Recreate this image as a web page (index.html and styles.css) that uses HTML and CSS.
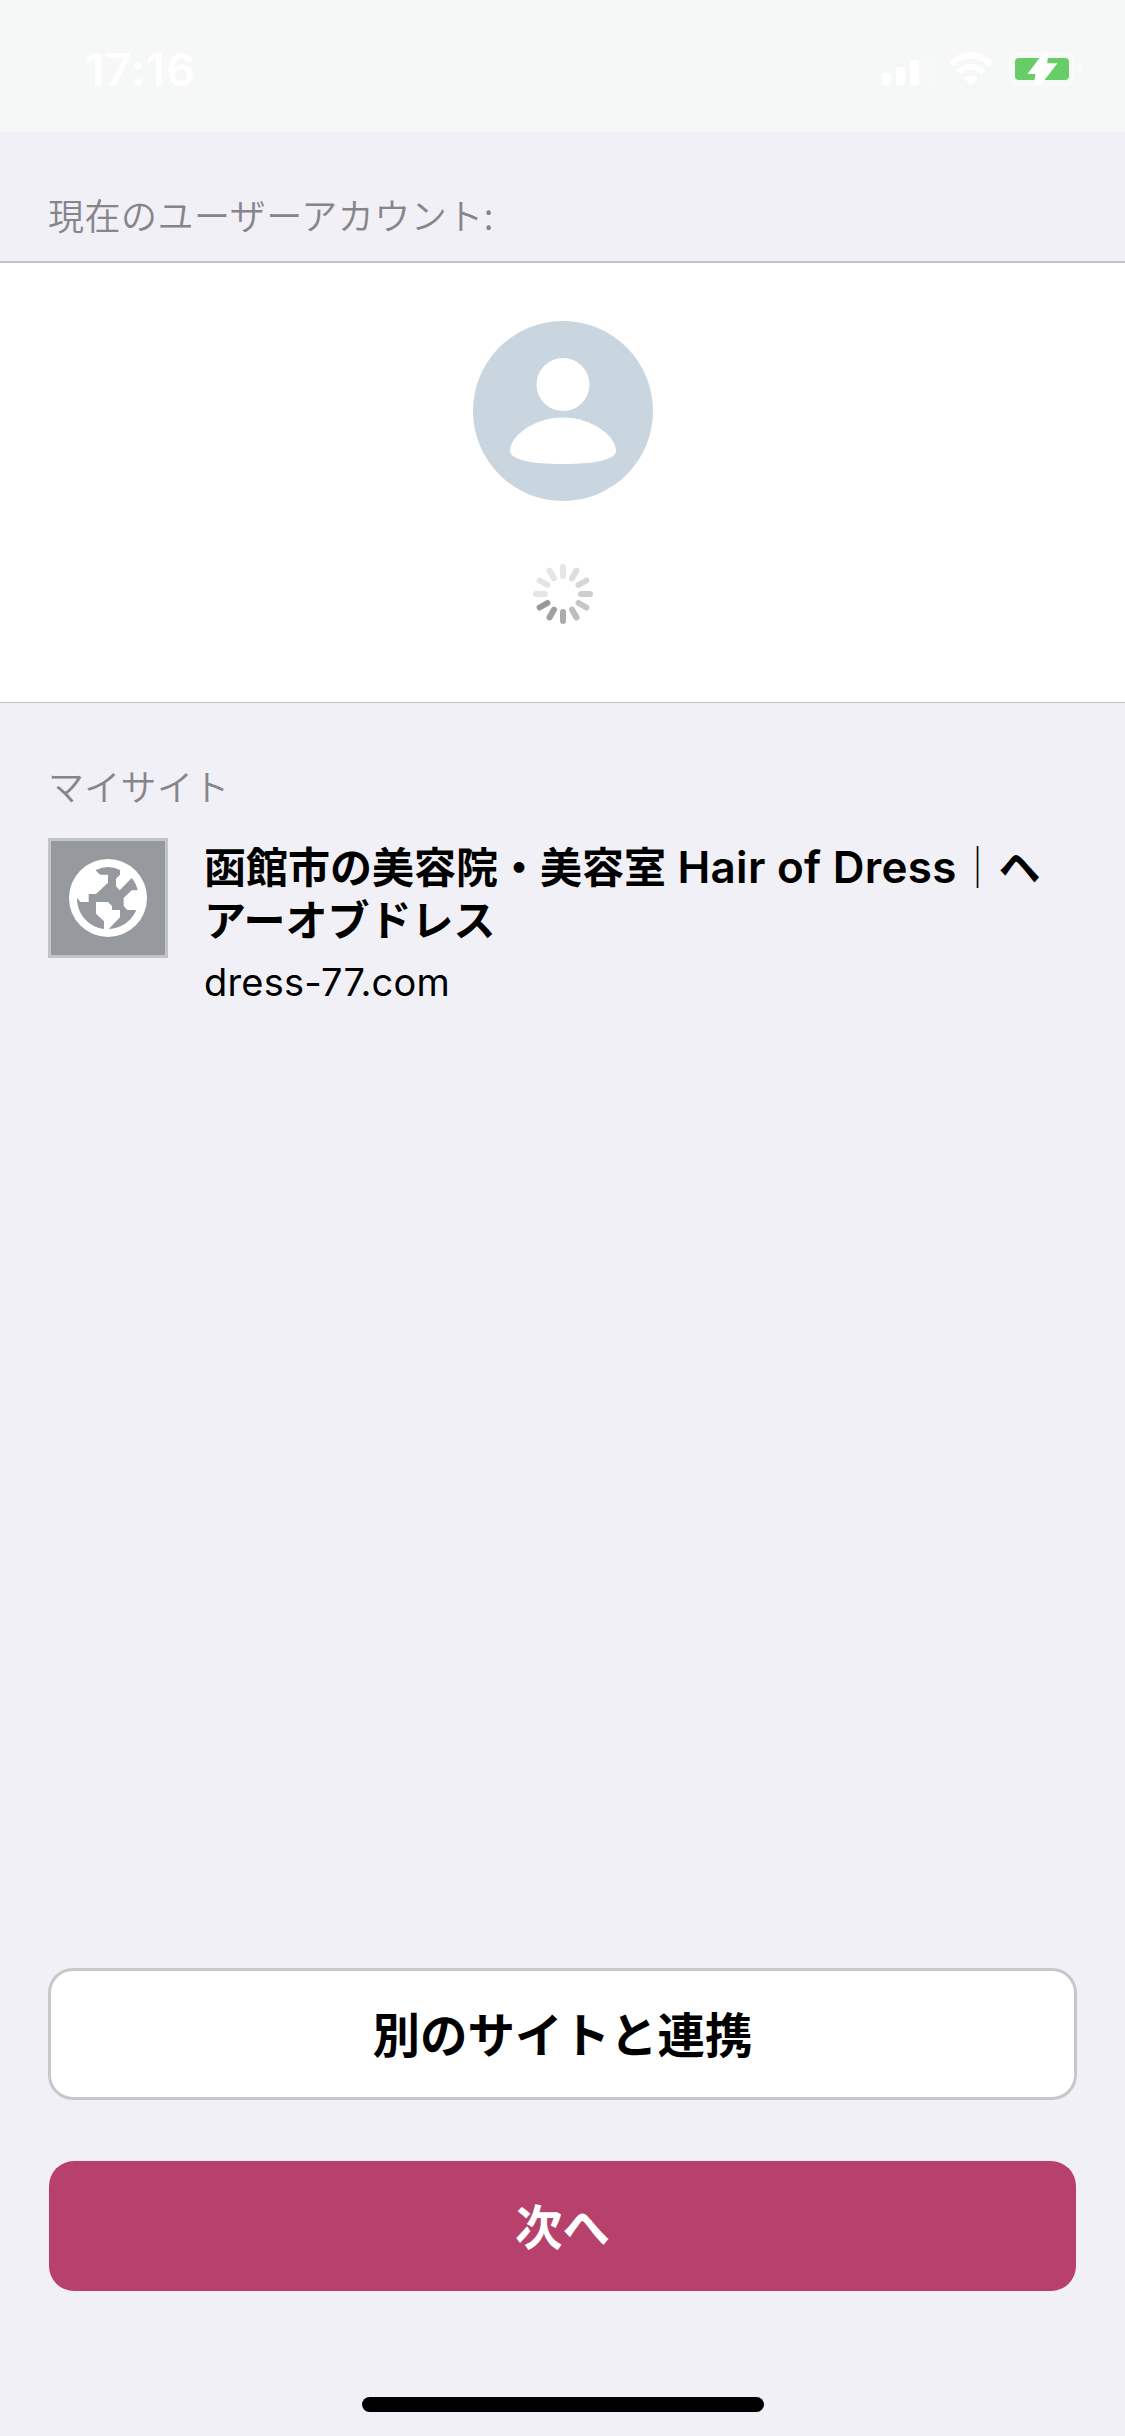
FILE: index.html
```html
<!DOCTYPE html>
<html lang="ja">
<head>
<meta charset="utf-8">
<title>マイサイト</title>
<link rel="stylesheet" href="styles.css">
</head>
<body>
<div class="screen">
  <header class="status-bar">
    <span class="time">17:16</span>
    <svg class="status-icons" width="202" height="36" viewBox="0 0 202 36">
      <g fill="#fff">
        <rect x="0" y="22" width="9" height="12" rx="2.5"/>
        <rect x="14" y="16" width="9" height="18" rx="2.5"/>
        <rect x="28" y="9" width="9" height="25" rx="2.5"/>
        <rect x="42" y="2" width="9" height="32" rx="2.5" opacity=".2"/>
        <path d="M66.500 11.500Q76 1.200 89 1.200T111.500 11.500L107.300 15.600Q99.500 7.800 89 7.800T70.700 15.600Z"/>
        <path d="M74.500 19.500Q81 12.700 89 12.700T103.500 19.500L99.400 23.500Q95 19 89 19T78.600 23.500Z"/>
        <path d="M82 27.500Q85 24.200 89 24.200T96 27.500L89 34.300Z"/>
      </g>
      <rect x="128.500" y="2.500" width="63" height="31" rx="9" fill="none" stroke="#fff" stroke-width="3" opacity=".4"/>
      <path d="M196 11.500Q200.500 13 200.500 17.500T196 23.500Z" fill="#fff" opacity=".4"/>
      <rect x="133" y="7" width="54" height="22" rx="4" fill="#67ce67"/>
      <path d="M163.500 2L157.500 7 145.500 23H153.500L151.500 34H157.500L162.500 29 175.500 12.200H165.200L166.500 2Z" fill="#fff"/>
    </svg>
  </header>
  <h2 class="section-label account-label">現在のユーザーアカウント:</h2>
  <section class="account">
    <svg class="avatar" width="180" height="180" viewBox="0 0 180 180">
      <circle cx="90" cy="90" r="90" fill="#c9d5df"/>
      <circle cx="90" cy="63.500" r="26.500" fill="#fff"/>
      <path d="M90 96.500C119 96.500 143 115 143 130C143 138.500 122 143 90 143S37 138.500 37 130C37 115 61 96.500 90 96.500Z" fill="#fff"/>
    </svg>
    <svg class="spinner" width="60" height="60" viewBox="-30 -30 60 60" stroke-width="6" stroke-linecap="round">
      <path d="M0-27V-18" stroke="#e5e5e5"/>
      <path d="M0-27V-18" stroke="#dedede" transform="rotate(30)"/>
      <path d="M0-27V-18" stroke="#d6d6d6" transform="rotate(60)"/>
      <path d="M0-27V-18" stroke="#cecece" transform="rotate(90)"/>
      <path d="M0-27V-18" stroke="#c6c6c6" transform="rotate(120)"/>
      <path d="M0-27V-18" stroke="#bdbdbd" transform="rotate(150)"/>
      <path d="M0-27V-18" stroke="#ababab" transform="rotate(180)"/>
      <path d="M0-27V-18" stroke="#a1a1a1" transform="rotate(210)"/>
      <path d="M0-27V-18" stroke="#999" transform="rotate(240)"/>
      <path d="M0-27V-18" stroke="#e5e5e5" transform="rotate(270)"/>
      <path d="M0-27V-18" stroke="#e5e5e5" transform="rotate(300)"/>
      <path d="M0-27V-18" stroke="#e5e5e5" transform="rotate(330)"/>
    </svg>
  </section>
  <h2 class="section-label sites-label">マイサイト</h2>
  <article class="site">
    <div class="site-icon">
      <svg width="78" height="78" viewBox="117 117 234 234">
        <circle cx="234" cy="234" r="117" fill="#fff"/>
        <path fill="#969a9f" d="M198 150Q234 132 270 150V164L258 176V199L269 211 305 174Q318 189 323 211H305L281 234V258L292 270H319C303 306 273 325 236 327L270 292V270H246V258L234 246H198V281L222 304V327C174 321 141 281 141 234L152 246H176V222H198L234 188V164H210L198 152Z"/>
      </svg>
    </div>
    <div class="site-text">
      <h3 class="site-title">函館市の美容院・美容室 <span class="latin">Hair of Dress</span><span class="bar">｜</span>ヘ<br>アーオブドレス</h3>
      <p class="site-url">dress-77.com</p>
    </div>
  </article>
  <footer class="actions">
    <button class="button secondary">別のサイトと連携</button>
    <button class="button primary">次へ</button>
    <div class="home-indicator"></div>
  </footer>
</div>
</body>
</html>
```
FILE: styles.css
```css
* { box-sizing: border-box; }
body {
  margin: 0;
  background: #f1f0f6;
  color: #000;
  font-family: Inter, "Noto Sans CJK JP", sans-serif;
}
h2, h3, p { margin: 0; }
svg { display: block; }
.screen {
  width: 1125px;
  height: 2436px;
  display: flex;
  flex-direction: column;
  overflow: hidden;
}
.status-bar {
  height: 132px;
  flex: none;
  background: #f6f8f7;
  color: #fff;
  display: flex;
  justify-content: space-between;
  align-items: flex-start;
  padding: 51px 41px 0 85px;
}
.time {
  font-size: 45px;
  font-weight: 600;
  line-height: 37px;
  letter-spacing: 1.1px;
}
.section-label {
  flex: none;
  padding-left: 48px;
  font-family: "Noto Sans CJK JP", sans-serif;
  font-size: 36px;
  font-weight: 350;
  line-height: 54px;
  letter-spacing: .5px;
  color: #86858a;
}
.account-label {
  height: 129px;
  padding-top: 55px;
}
.account {
  flex: none;
  height: 442px;
  background: #fff;
  border-top: 2px solid #c3c3c5;
  border-bottom: 1px solid #c3c3c5;
  display: flex;
  flex-direction: column;
  align-items: center;
  gap: 63px;
  padding: 58px 0 0 1px;
}
.sites-label {
  height: 135px;
  padding-top: 55px;
  letter-spacing: .3px;
}
.site {
  flex: none;
  display: flex;
  gap: 36px;
  padding-left: 48px;
}
.site-icon {
  width: 120px;
  height: 120px;
  flex: none;
  background: #969a9f;
  border: 3px solid #c3c4c6;
  display: flex;
  align-items: center;
  justify-content: center;
}
.site-title {
  font-family: "Noto Sans CJK JP", sans-serif;
  font-size: 42px;
  font-weight: 700;
  line-height: 53px;
  white-space: nowrap;
}
.latin {
  margin-left: 2px;
  font-family: Inter, sans-serif;
  font-size: 44px;
  font-weight: 600;
  line-height: 1;
  letter-spacing: .25px;
}
.bar { font-weight: 300; }
.site-url {
  font-size: 38px;
  line-height: 48px;
  letter-spacing: .2px;
  margin-top: 14px;
}
.actions {
  margin-top: auto;
  display: flex;
  flex-direction: column;
  align-items: center;
  padding: 0 48px 24px;
}
.button {
  font-family: "Noto Sans CJK JP", sans-serif;
  font-size: 47.500px;
  font-weight: 700;
  line-height: 60px;
  padding: 0 0 3px;
  border: 0;
  border-radius: 25px;
}
.secondary {
  width: 1029px;
  height: 132px;
  background: #fff;
  color: #000;
  border: 3px solid #c7c7cc;
}
.primary {
  width: 1027px;
  height: 130px;
  margin: 61px 0 106px;
  background: #b8406c;
  color: #fff;
}
.home-indicator {
  width: 402px;
  height: 15px;
  border-radius: 8px;
  background: #000;
}
```
